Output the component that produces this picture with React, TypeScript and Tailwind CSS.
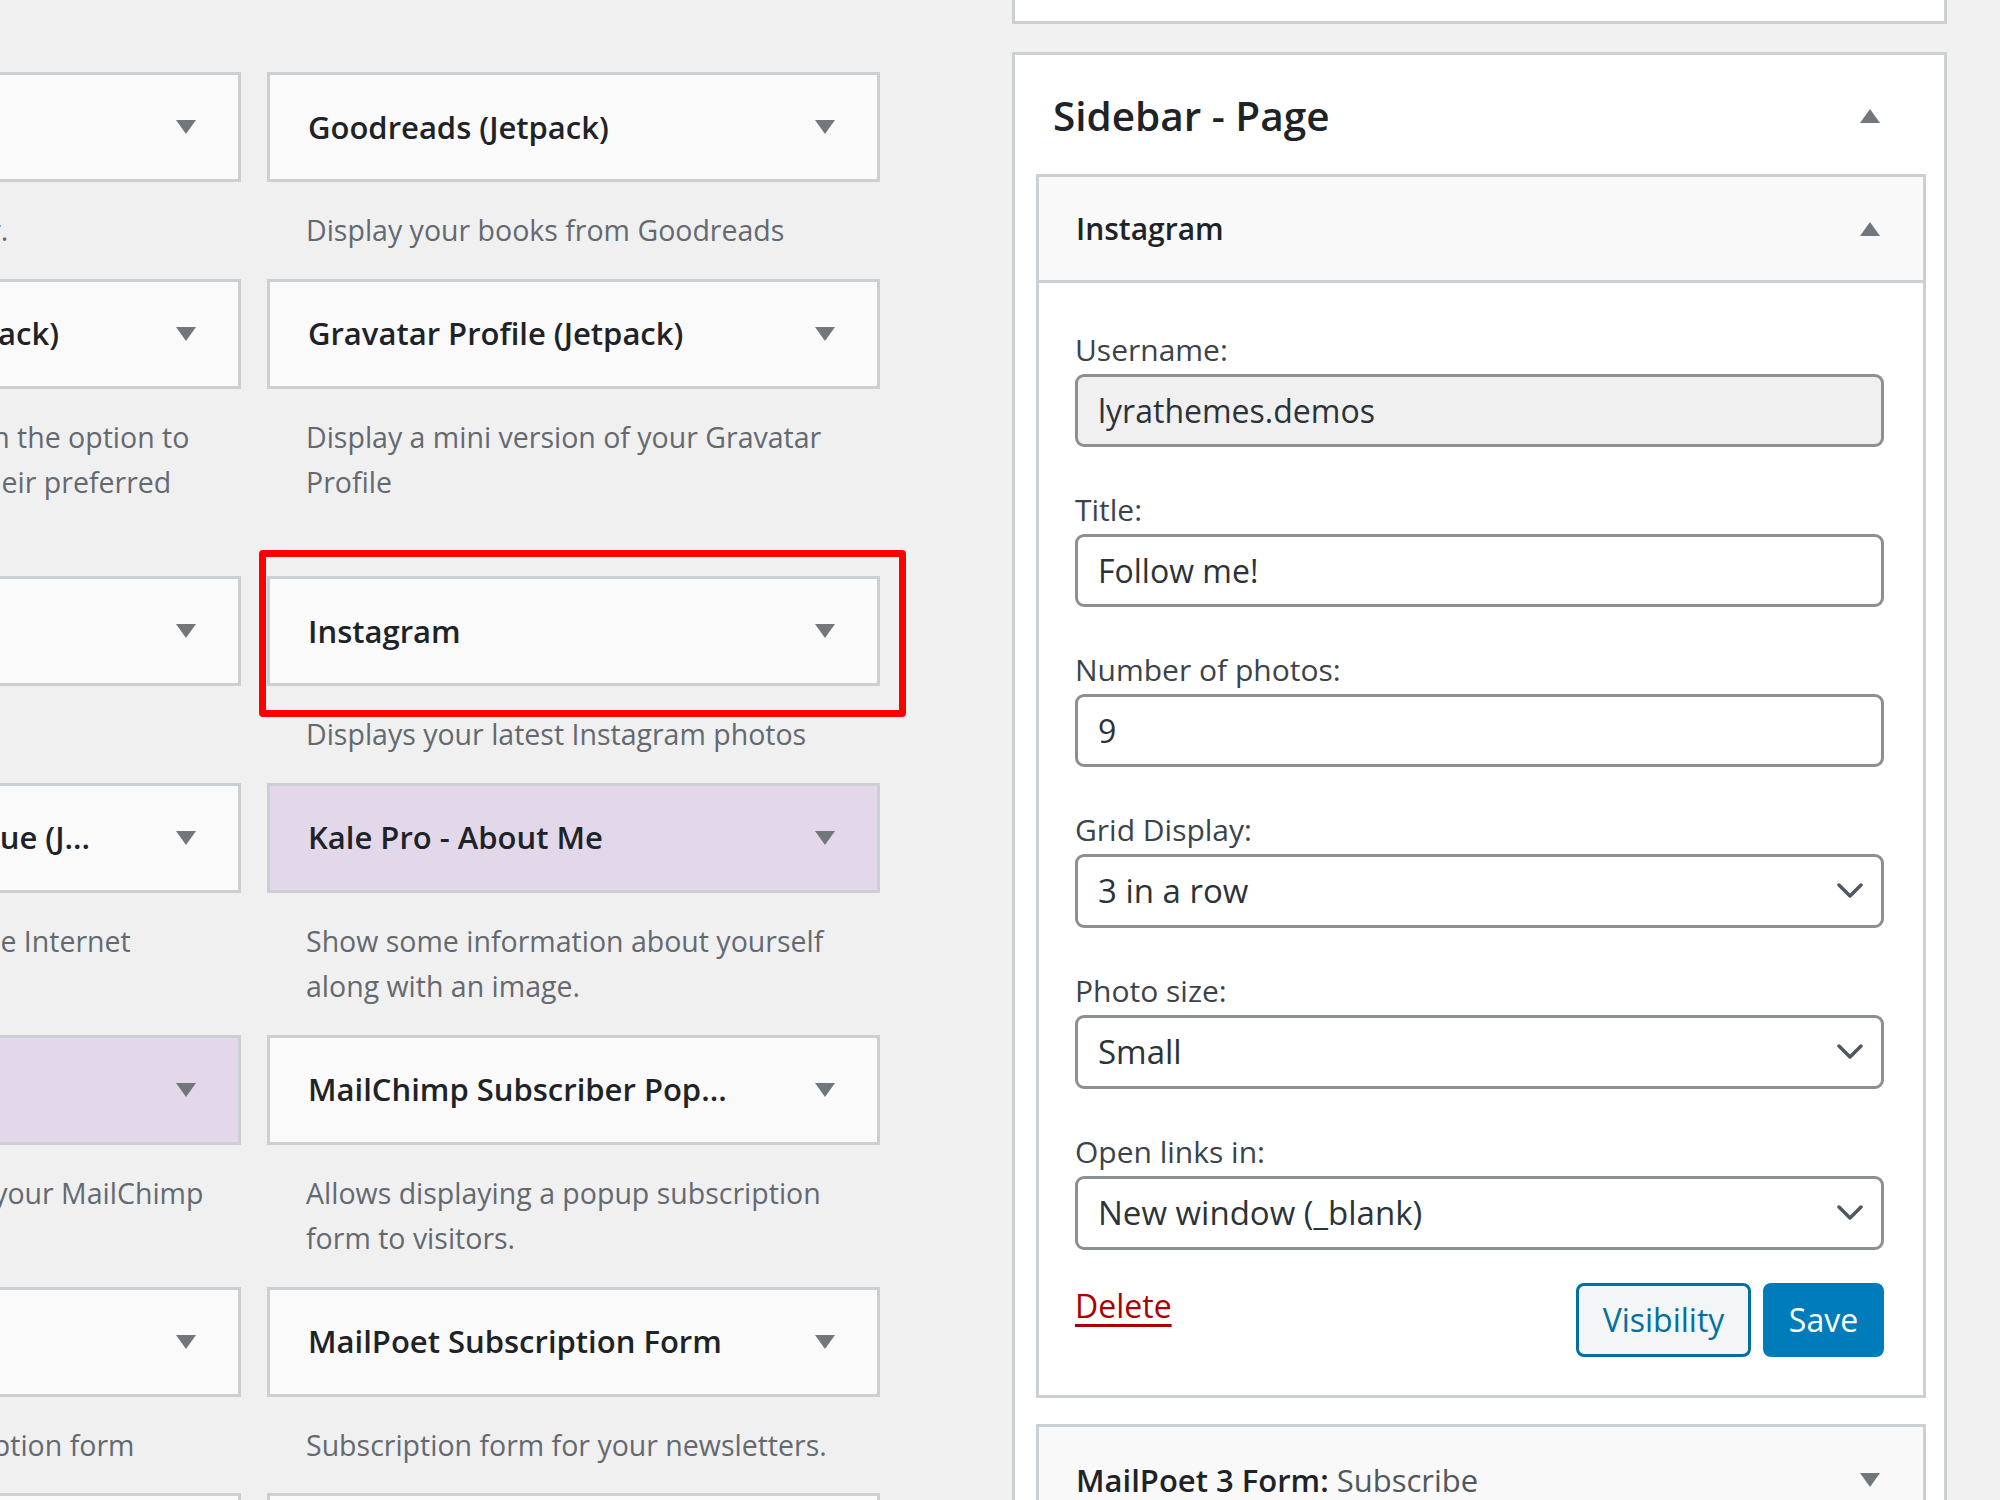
import type { ReactNode } from 'react'

type Widget = {
  title: string
  desc: string
  purple?: boolean
  marked?: boolean
}

const LEFT: Widget[] = [
  { title: 'Gallery', desc: 'Displays an image gallery.' },
  {
    title: 'Google Translate (Jetpack)',
    desc: 'Provide your readers with the option to translate your site into their preferred language.',
  },
  { title: 'Image', desc: 'Displays an image.' },
  {
    title: 'Internet Defense League (J...',
    desc: 'Show your support for the Internet Defense League.',
  },
  {
    title: 'Kale Pro - Newsletter',
    desc: 'Show a sign-up form for your MailChimp list.',
    purple: true,
  },
  { title: 'MailPoet 3 Form', desc: 'Add a newsletter subscription form' },
  { title: 'Meta', desc: 'Login, RSS, & WordPress.org links.' },
]

const RIGHT: Widget[] = [
  { title: 'Goodreads (Jetpack)', desc: 'Display your books from Goodreads' },
  {
    title: 'Gravatar Profile (Jetpack)',
    desc: 'Display a mini version of your Gravatar Profile',
  },
  {
    title: 'Instagram',
    desc: 'Displays your latest Instagram photos',
    marked: true,
  },
  {
    title: 'Kale Pro - About Me',
    desc: 'Show some information about yourself along with an image.',
    purple: true,
  },
  {
    title: 'MailChimp Subscriber Pop...',
    desc: 'Allows displaying a popup subscription form to visitors.',
  },
  {
    title: 'MailPoet Subscription Form',
    desc: 'Subscription form for your newsletters.',
  },
  { title: 'Milestone (Jetpack)', desc: 'Display a countdown to a certain date.' },
]

function Caret({ up = false }: Readonly<{ up?: boolean }>) {
  return (
    <svg
      width="20"
      height="14"
      viewBox="0 0 20 14"
      className="shrink-0 fill-[#72777c]"
    >
      <polygon points={up ? '0,14 20,14 10,0' : '0,0 20,0 10,14'} />
    </svg>
  )
}

function Chevron() {
  return (
    <svg
      width="26"
      height="16"
      viewBox="0 0 26 16"
      fill="none"
      className="shrink-0 stroke-[#50575e]"
      strokeWidth="3.5"
      strokeLinecap="round"
      strokeLinejoin="round"
    >
      <polyline points="2,2 13,13 24,2" />
    </svg>
  )
}

function AvailableWidget({ w }: Readonly<{ w: Widget }>) {
  return (
    <div className="relative">
      <div
        className={`flex h-[110px] items-center justify-between border-[3px] border-[#ccd0d4] pl-[38px] pr-[42px] ${
          w.purple ? 'bg-[#e2d8ea]' : 'bg-[#fafafa]'
        }`}
      >
        <span className="whitespace-nowrap text-[31px] font-semibold text-[#1d2327]">
          {w.title}
        </span>
        <Caret />
      </div>
      <p className="mb-[25px] mt-[26px] pl-[39px] pr-[20px] text-[28.5px] leading-[45.5px] text-[#646970]">
        {w.desc}
      </p>
      {w.marked && (
        <div className="pointer-events-none absolute -top-[26px] -left-[8px] h-[167px] w-[647px] rounded-[4px] border-[7px] border-[#ff0000]" />
      )}
    </div>
  )
}

function Field({
  label,
  children,
}: Readonly<{ label: string; children: ReactNode }>) {
  return (
    <div>
      <label className="block text-[30px] leading-[40px] text-[#3c434a]">
        {label}
      </label>
      <div className="mt-[4px]">{children}</div>
    </div>
  )
}

const inputClass =
  'h-[73px] w-full rounded-[9px] border-[3px] border-[#8c8f94] px-[20px] text-[32px] text-[#2c3338] outline-none'

function SelectBox({ value }: Readonly<{ value: string }>) {
  return (
    <div className="flex h-[74px] items-center justify-between rounded-[9px] border-[3px] border-[#8c8f94] bg-white pl-[20px] pr-[18px] text-[33px] text-[#2c3338]">
      <span>{value}</span>
      <Chevron />
    </div>
  )
}

export default function App() {
  const rows = LEFT.map((l, i) => [l, RIGHT[i]] as const)

  return (
    <div className="flex h-[1500px] w-[2000px] overflow-hidden bg-[#f0f0f1] font-['Open_Sans','Noto_Sans',sans-serif]">
      {/* available widgets, scrolled so only part of the left column shows */}
      <div className="w-[1012px] shrink-0 overflow-hidden pt-[72px]">
        <div className="-ml-[372px] grid grid-cols-[613px_613px] items-start gap-x-[26px]">
          {rows.map(([l, r]) => (
            <div key={r.title} className="contents">
              <AvailableWidget w={l} />
              <AvailableWidget w={r} />
            </div>
          ))}
        </div>
      </div>

      {/* sidebars */}
      <div className="w-[935px] shrink-0">
        <div className="h-[24px] border-x-[3px] border-b-[3px] border-[#ccd0d4] bg-white" />

        <div className="mt-[28px] h-[1500px] border-[3px] border-[#ccd0d4] bg-white">
          <div className="flex items-center justify-between pb-[33px] pl-[38px] pr-[64px] pt-[36px]">
            <h2 className="text-[40.5px] font-semibold leading-[50px] text-[#1d2327]">
              Sidebar - Page
            </h2>
            <Caret up />
          </div>

          <div className="ml-[21px] mr-[18px] border-[3px] border-[#ccd0d4]">
            <div className="flex h-[106px] items-center justify-between border-b-[3px] border-[#ccd0d4] bg-[#f9f9f9] pl-[37px] pr-[43px]">
              <h3 className="text-[30px] font-semibold text-[#1d2327]">
                Instagram
              </h3>
              <Caret up />
            </div>

            <div className="bg-white pb-[38px] pl-[36px] pr-[39px] pt-[47px]">
              <div className="flex flex-col gap-[43px]">
                <Field label="Username:">
                  <input
                    readOnly
                    defaultValue="lyrathemes.demos"
                    className={`${inputClass} bg-[#f0f0f1]`}
                  />
                </Field>
                <Field label="Title:">
                  <input
                    readOnly
                    defaultValue="Follow me!"
                    className={`${inputClass} bg-white`}
                  />
                </Field>
                <Field label="Number of photos:">
                  <input
                    readOnly
                    defaultValue="9"
                    className={`${inputClass} bg-white`}
                  />
                </Field>
                <Field label="Grid Display:">
                  <SelectBox value="3 in a row" />
                </Field>
                <Field label="Photo size:">
                  <SelectBox value="Small" />
                </Field>
                <Field label="Open links in:">
                  <SelectBox value="New window (_blank)" />
                </Field>
              </div>

              <div className="mt-[33px] flex items-start justify-between">
                <a
                  href="#"
                  className="mt-[3px] text-[32px] leading-[40px] text-[#aa0000] underline decoration-[3px] underline-offset-[6px]"
                >
                  Delete
                </a>
                <div className="flex gap-[12px]">
                  <button
                    type="button"
                    className="h-[74px] w-[175px] rounded-[8px] border-[3px] border-[#0071a1] bg-[#f3f5f6] text-[32px] text-[#0071a1]"
                  >
                    Visibility
                  </button>
                  <button
                    type="button"
                    className="h-[74px] w-[121px] rounded-[8px] border-[3px] border-[#007cba] bg-[#007cba] text-[32px] text-white"
                  >
                    Save
                  </button>
                </div>
              </div>
            </div>
          </div>

          <div className="ml-[21px] mr-[18px] mt-[26px] border-[3px] border-[#ccd0d4]">
            <div className="flex h-[106px] items-center justify-between bg-[#f9f9f9] pl-[37px] pr-[43px]">
              <h3 className="text-[31px] font-semibold text-[#1d2327]">
                MailPoet 3 Form:{' '}
                <span className="font-normal text-[#50575e]">Subscribe</span>
              </h3>
              <Caret />
            </div>
          </div>
        </div>
      </div>
    </div>
  )
}
